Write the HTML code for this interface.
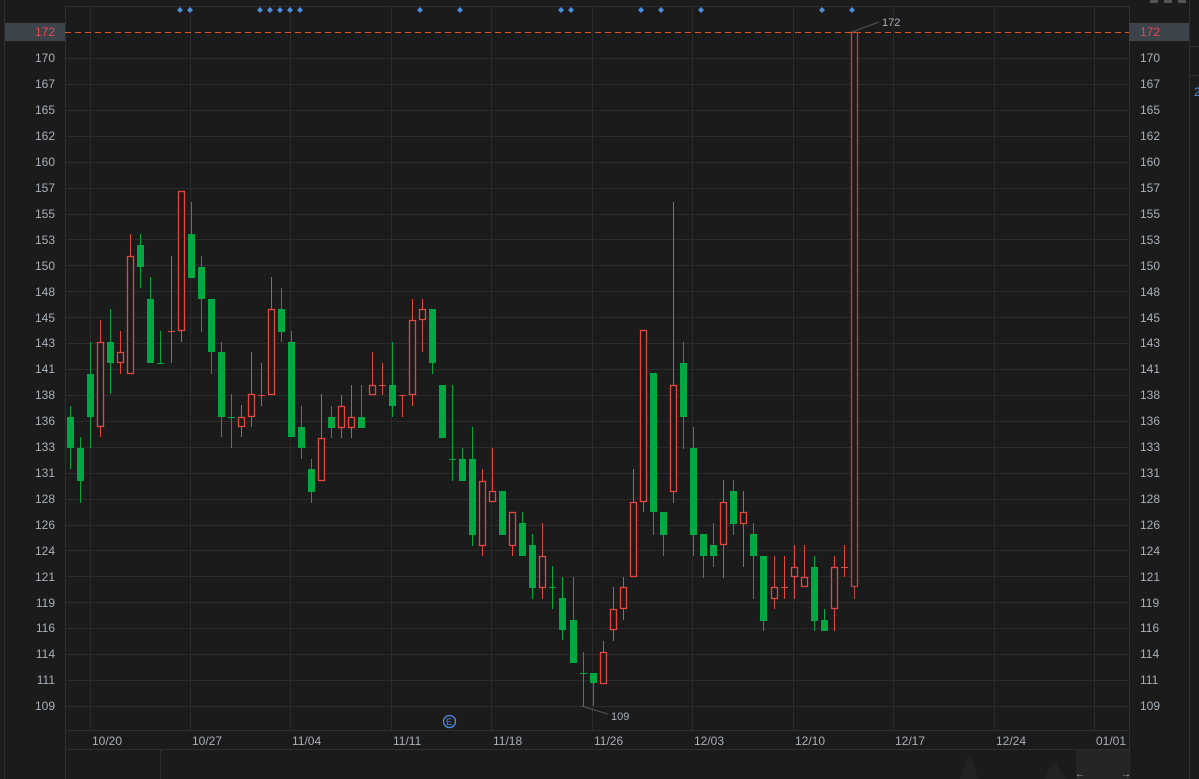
<!DOCTYPE html>
<html><head><meta charset="utf-8">
<style>
html,body{margin:0;padding:0;background:#1b1b1b;width:1199px;height:779px;overflow:hidden}
svg{display:block}
text{font-family:"Liberation Sans",sans-serif;font-size:12px;fill:#a8afb8}
</style></head><body>
<svg id="s" width="1199" height="779" xmlns="http://www.w3.org/2000/svg">
<rect width="1199" height="779" fill="#1b1b1b"/>
<g id="grid" stroke="#2b2b2b" stroke-width="1"></g>
<g stroke="#2e2e2e" fill="none">
<line x1="65.5" y1="6" x2="65.5" y2="779"/>
<line x1="1129.5" y1="6" x2="1129.5" y2="779"/>
<line x1="65" y1="6.5" x2="1129" y2="6.5"/>
<line x1="65" y1="730.5" x2="1129" y2="730.5"/>
<line x1="65" y1="749.5" x2="1129" y2="749.5"/>
<line x1="160.5" y1="749" x2="160.5" y2="779"/>
<line x1="4.5" y1="0" x2="4.5" y2="779"/>
<line x1="1189.5" y1="0" x2="1189.5" y2="779"/>
<line x1="1189" y1="46.5" x2="1199" y2="46.5"/>
<line x1="1189" y1="75.5" x2="1199" y2="75.5"/>
</g>
<rect x="1076" y="750" width="53" height="29" fill="#252525"/>
<path d="M960 779 L966 760 L970 756 L974 765 L978 779 Z M1044 779 L1050 768 L1055 762 L1060 770 L1066 779Z" fill="#222"/>
<text x="1075" y="777" style="font-size:10px">←</text>
<text x="1121" y="777" style="font-size:10px">→</text>
<line x1="65" y1="32.5" x2="1129" y2="32.5" stroke="#e0561d" stroke-width="1" stroke-dasharray="6,4"/>
<g id="candles"></g>
<g id="dia" fill="#4a90e2"></g>
<line x1="852" y1="32" x2="879" y2="22" stroke="#555"/>
<text x="882" y="26" style="font-size:11px">172</text>
<line x1="581" y1="706" x2="608" y2="714" stroke="#555"/>
<text x="611" y="720" style="font-size:11px">109</text>
<circle cx="449.5" cy="721.5" r="6" fill="none" stroke="#4a90e2" stroke-width="1.3"/>
<text x="446" y="725" style="font-size:9px;fill:#4a90e2">E</text>
<rect x="5" y="23" width="60" height="18" fill="#3d434a"/>
<text x="55" y="36" text-anchor="end" style="fill:#e8474a">172</text>
<rect x="1129" y="23" width="60" height="18" fill="#3d434a"/>
<text x="1140" y="36" style="fill:#e8474a">172</text>
<g id="xlab">
<text x="92" y="745">10/20</text><text x="192" y="745">10/27</text><text x="292" y="745">11/04</text>
<text x="393" y="745">11/11</text><text x="493" y="745">11/18</text><text x="594" y="745">11/26</text>
<text x="694" y="745">12/03</text><text x="795" y="745">12/10</text><text x="895" y="745">12/17</text>
<text x="996" y="745">12/24</text><text x="1096" y="745">01/01</text>
</g>
<g>
<text x="55" y="62" text-anchor="end">170</text><text x="1140" y="62">170</text>
<text x="55" y="88" text-anchor="end">167</text><text x="1140" y="88">167</text>
<text x="55" y="114" text-anchor="end">165</text><text x="1140" y="114">165</text>
<text x="55" y="140" text-anchor="end">162</text><text x="1140" y="140">162</text>
<text x="55" y="166" text-anchor="end">160</text><text x="1140" y="166">160</text>
<text x="55" y="192" text-anchor="end">157</text><text x="1140" y="192">157</text>
<text x="55" y="218" text-anchor="end">155</text><text x="1140" y="218">155</text>
<text x="55" y="244" text-anchor="end">153</text><text x="1140" y="244">153</text>
<text x="55" y="270" text-anchor="end">150</text><text x="1140" y="270">150</text>
<text x="55" y="296" text-anchor="end">148</text><text x="1140" y="296">148</text>
<text x="55" y="322" text-anchor="end">145</text><text x="1140" y="322">145</text>
<text x="55" y="347" text-anchor="end">143</text><text x="1140" y="347">143</text>
<text x="55" y="373" text-anchor="end">141</text><text x="1140" y="373">141</text>
<text x="55" y="399" text-anchor="end">138</text><text x="1140" y="399">138</text>
<text x="55" y="425" text-anchor="end">136</text><text x="1140" y="425">136</text>
<text x="55" y="451" text-anchor="end">133</text><text x="1140" y="451">133</text>
<text x="55" y="477" text-anchor="end">131</text><text x="1140" y="477">131</text>
<text x="55" y="503" text-anchor="end">128</text><text x="1140" y="503">128</text>
<text x="55" y="529" text-anchor="end">126</text><text x="1140" y="529">126</text>
<text x="55" y="555" text-anchor="end">124</text><text x="1140" y="555">124</text>
<text x="55" y="581" text-anchor="end">121</text><text x="1140" y="581">121</text>
<text x="55" y="607" text-anchor="end">119</text><text x="1140" y="607">119</text>
<text x="55" y="632" text-anchor="end">116</text><text x="1140" y="632">116</text>
<text x="55" y="658" text-anchor="end">114</text><text x="1140" y="658">114</text>
<text x="55" y="684" text-anchor="end">111</text><text x="1140" y="684">111</text>
<text x="55" y="710" text-anchor="end">109</text><text x="1140" y="710">109</text>
</g>
<g fill="#555"><rect x="1150" y="0" width="8" height="3"/><rect x="1164" y="0" width="8" height="3"/><rect x="1178" y="0" width="8" height="3"/></g>
<text x="1194" y="96" style="fill:#4a90e2">2</text>
</svg>
<script>
var NS="http://www.w3.org/2000/svg";
function el(p,t,a){var e=document.createElementNS(NS,t);for(var k in a)e.setAttribute(k,a[k]);p.appendChild(e);return e;}
var g=document.getElementById('grid');
for(var i=0;i<26;i++){var y=Math.round(58+i*25.92)+0.5;el(g,'line',{x1:65,y1:y,x2:1129,y2:y});}
[90,190,290,391,491,592,692,793,893,994,1094].forEach(function(x){el(g,'line',{x1:x+0.5,y1:6,x2:x+0.5,y2:730});});
var D=[
[406,417,448,469,'g'],[437,448,481,503,'g'],[342,374,417,448,'g'],[320,342,427,437,'r'],[309,342,363,394,'g'],
[331,352,363,374,'r'],[234,256,374,374,'r'],[234,245,267,288,'g'],[277,299,363,363,'g'],[331,363,363,363,'g'],
[256,331,331,363,'r'],[191,191,331,342,'r'],[202,234,278,278,'g'],[256,267,299,332,'g'],[299,299,352,374,'g'],
[342,352,417,437,'g'],[394,417,417,448,'g'],[405,417,427,437,'r'],[352,394,417,427,'r'],[363,395,395,406,'r'],
[277,309,395,395,'r'],[288,309,332,342,'g'],[331,342,437,437,'g'],[406,427,448,459,'g'],[459,469,492,503,'g'],
[394,438,481,481,'r'],[406,417,428,438,'g'],[395,406,428,438,'r'],[385,417,428,438,'r'],[385,417,428,428,'g'],
[352,385,395,395,'r'],[363,385,385,395,'r'],[342,385,406,417,'g'],[395,395,395,417,'r'],[299,320,395,406,'r'],
[299,309,320,352,'r'],[309,309,363,374,'g'],[385,385,438,438,'g'],[385,459,459,481,'g'],[448,459,481,481,'g'],
[427,459,535,546,'g'],[469,481,546,556,'r'],[448,491,502,502,'r'],[491,491,535,535,'g'],[512,512,546,556,'r'],
[512,523,556,556,'g'],[534,545,588,599,'g'],[523,556,588,599,'r'],[566,587,587,609,'g'],[577,598,630,640,'g'],
[577,620,663,663,'g'],[652,673,673,706,'g'],[673,673,683,706,'g'],[641,652,684,684,'r'],[587,609,630,641,'r'],
[577,587,609,620,'r'],[469,502,577,577,'r'],[330,330,502,512,'r'],[373,373,512,535,'g'],[512,512,535,556,'g'],
[202,385,492,503,'r'],[342,363,417,449,'g'],[427,448,535,556,'g'],[534,534,556,578,'g'],[523,545,556,567,'g'],
[480,502,545,578,'r'],[480,491,524,535,'g'],[491,512,524,567,'r'],[523,534,556,599,'g'],[556,556,621,631,'g'],
[556,587,599,609,'r'],[556,587,587,599,'r'],[545,567,577,599,'r'],[545,577,587,587,'r'],[556,567,621,631,'g'],
[609,620,631,631,'g'],[556,567,609,631,'r'],[545,567,567,577,'r'],[32,32,587,599,'r']];
var c=document.getElementById('candles');
D.forEach(function(d,i){
 var x=Math.round(70+i*10.05);var col=d[4]=='g'?'#00a843':(i==78?'#c0453c':'#e2483f');
 el(c,'line',{x1:x+0.5,y1:d[0],x2:x+0.5,y2:d[3],stroke:col,'stroke-width':1});
 if(d[2]-d[1]<2){el(c,'line',{x1:x-3,y1:d[1]+0.5,x2:x+4,y2:d[1]+0.5,stroke:col,'stroke-width':1});}
 else if(d[4]=='g'){el(c,'rect',{x:x-3,y:d[1],width:7,height:d[2]-d[1],fill:col});}
 else{el(c,'rect',{x:x-2.5,y:d[1]+0.5,width:6,height:d[2]-d[1]-1,fill:'#1b1b1b',stroke:col,'stroke-width':1.3});}
});
var dg=document.getElementById('dia');
[180,190,260,270,280,290,300,420,460,561,571,641,661,701,822,852].forEach(function(x){
 el(dg,'path',{d:'M'+x+' 7 L'+(x+3)+' 10 L'+x+' 13 L'+(x-3)+' 10Z'});});
</script>
</body></html>
